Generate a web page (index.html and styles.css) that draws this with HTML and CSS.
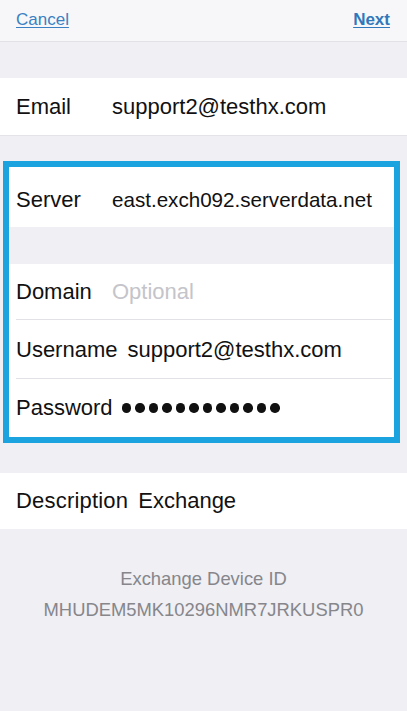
FILE: index.html
```html
<!DOCTYPE html>
<html>
<head>
<meta charset="utf-8">
<link rel="stylesheet" href="styles.css">
</head>
<body>
<div class="screen">
  <div class="nav">
    <a class="nav-link" href="#">Cancel</a>
    <a class="nav-link nav-next" href="#">Next</a>
  </div>
  <div class="gap gap-top"></div>
  <div class="row row-email">
    <span class="label">Email</span>
    <span class="value">support2@testhx.com</span>
  </div>
  <div class="gap gap-mid"></div>
  <div class="highlight">
    <div class="row row-server">
      <span class="label">Server</span>
      <span class="value value-small">east.exch092.serverdata.net</span>
    </div>
    <div class="gap gap-inner"></div>
    <div class="group">
      <div class="row row-domain sep">
        <span class="label">Domain</span>
        <span class="value placeholder">Optional</span>
      </div>
      <div class="row row-user sep">
        <span class="label">Username</span>
        <span class="value">support2@testhx.com</span>
      </div>
      <div class="row row-pass">
        <span class="label">Password</span>
        <span class="dots" aria-label="password">
          <i></i><i></i><i></i><i></i><i></i><i></i><i></i><i></i><i></i><i></i><i></i><i></i>
        </span>
      </div>
    </div>
  </div>
  <div class="gap gap-desc"></div>
  <div class="row row-desc">
    <span class="label label-desc">Description</span>
    <span class="value">Exchange</span>
  </div>
  <div class="footer">
    <div class="footer-line">Exchange Device ID</div>
    <div class="footer-line">MHUDEM5MK10296NMR7JRKUSPR0</div>
  </div>
</div>
</body>
</html>
```

FILE: styles.css
```css
html, body {
  margin: 0;
  padding: 0;
}
body {
  background: #efeff4;
  font-family: "Liberation Sans", Arial, sans-serif;
  color: #111;
}
.screen {
  width: 407px;
  height: 711px;
  overflow: hidden;
  display: flex;
  flex-direction: column;
  background: #efeff4;
}
.nav {
  height: 41px;
  flex: none;
  background: #f7f7f9;
  border-bottom: 1px solid #e1e1e6;
  display: flex;
  align-items: center;
  justify-content: space-between;
  padding: 0 17px 0 16px;
}
.nav-link {
  font-size: 17px;
  color: #3a80c2;
  text-decoration: underline;
  text-underline-offset: 2px;
  margin-top: -2px;
}
.nav-next {
  font-weight: bold;
  color: #2f78bb;
}
.gap { flex: none; background: #efeff4; }
.gap-top { height: 36px; }
.gap-mid { height: 25px; border-top: 1px solid #e3e3e8; }
.gap-inner { height: 37px; }
.gap-desc { height: 30px; }
.row {
  flex: none;
  background: #fff;
  display: flex;
  align-items: center;
  font-size: 22px;
  padding-left: 16px;
}
.row-email { height: 57px; }
.label {
  min-width: 86px;
  margin-right: 10px;
  white-space: nowrap;
}
.label-desc { letter-spacing: 0.2px; }
.value { white-space: nowrap; }
.value-small { font-size: 20.6px; }
.placeholder { color: #c4c4ca; }
.highlight {
  flex: none;
  margin: 0 7px 0 3px;
  border: 6px solid #1aa3df;
  display: flex;
  flex-direction: column;
  background: #efeff4;
}
.highlight .row { padding-left: 7px; }
.row-server { height: 60px; padding-top: 6px; box-sizing: border-box; }
.group { background: #fff; }
.sep { position: relative; }
.sep::after {
  content: "";
  position: absolute;
  left: 7px;
  right: 2px;
  bottom: 0;
  height: 1px;
  background: #e2e2e6;
}
.row-domain { height: 56px; }
.row-user { height: 59px; }
.row-pass { height: 58px; }
.row-desc { height: 56px; }
.dots {
  display: flex;
  gap: 4px;
  margin-left: -1px;
}
.dots i {
  display: block;
  width: 9.5px;
  height: 9.5px;
  border-radius: 50%;
  background: #111;
}
.footer {
  padding-top: 34px;
  text-align: center;
  color: #86868b;
  font-size: 18.4px;
  line-height: 31px;
}
```
